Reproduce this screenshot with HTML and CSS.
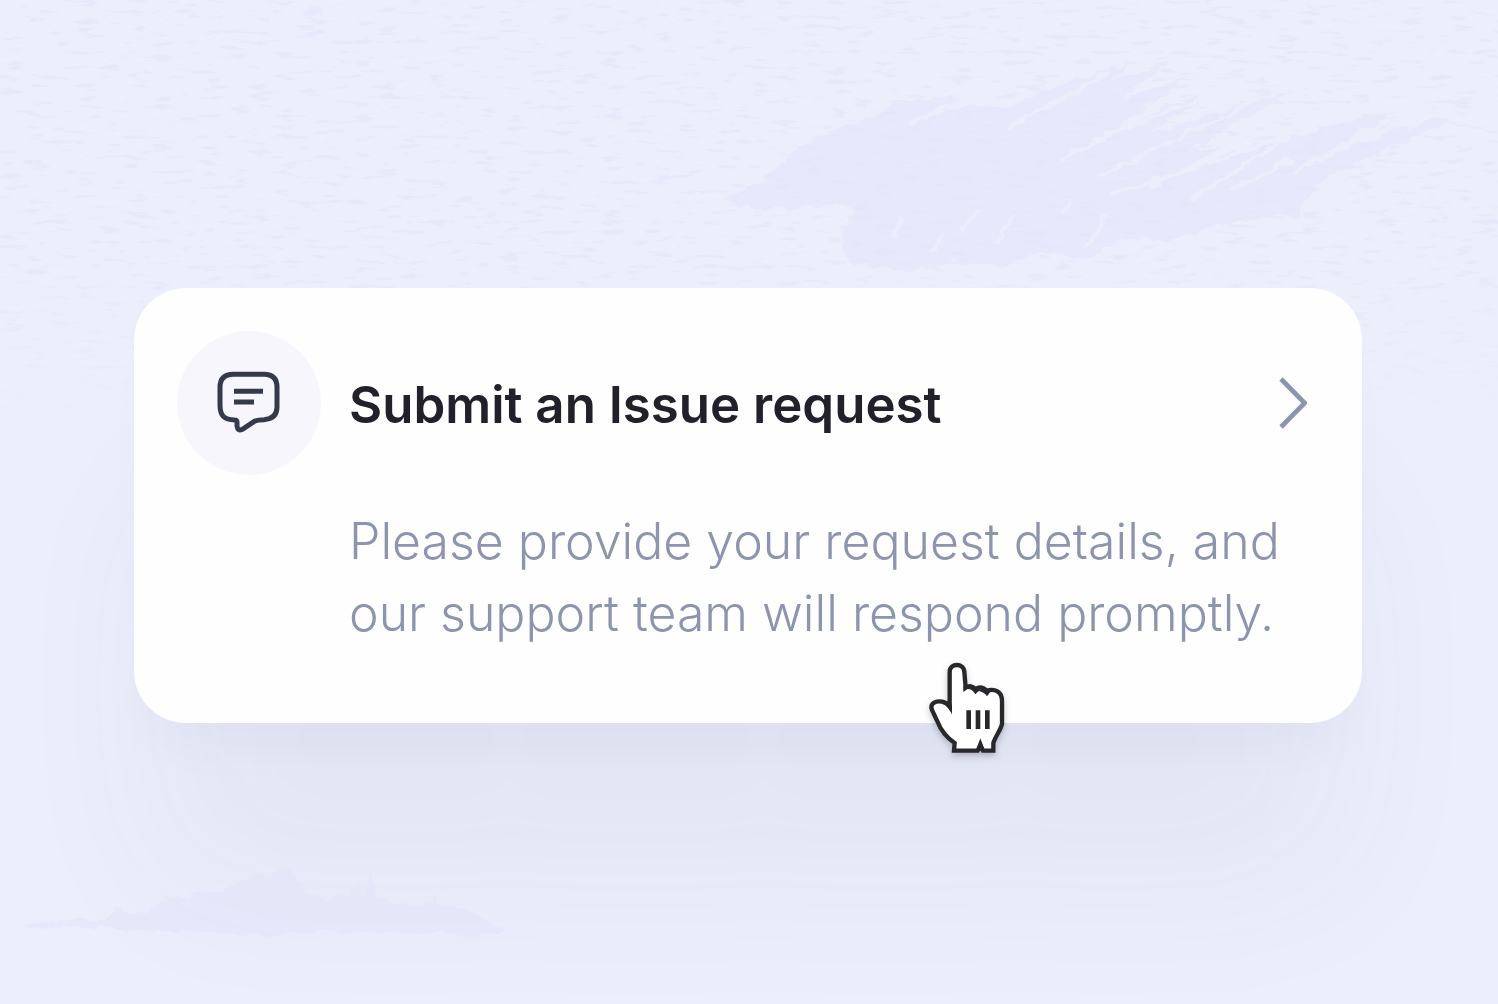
FILE: index.html
```
<!DOCTYPE html>
<html lang="en">
<head>
	<meta charset="UTF-8">
	<meta name="viewport" content="width=device-width, initial-scale=1.0">
	<title>Submit an Issue request</title>
	<link rel="stylesheet" href="styles.css">
</head>
<body>
<!-- painted backdrop -->
<svg class="backdrop" viewBox="0 0 1498 1004" preserveAspectRatio="xMidYMid slice" aria-hidden="true">
	<defs>
		<filter id="rough" x="-5%" y="-10%" width="110%" height="120%">
			<feTurbulence type="fractalNoise" baseFrequency="0.06 0.09" numOctaves="4" seed="4"/>
			<feDisplacementMap in="SourceGraphic" scale="12" xChannelSelector="R" yChannelSelector="G"/>
		</filter>
		<filter id="grain" x="0" y="0" width="100%" height="100%" color-interpolation-filters="sRGB">
			<feTurbulence type="fractalNoise" baseFrequency="0.04 0.2" numOctaves="3" seed="9"/>
			<feColorMatrix values="0 0 0 0 0.87  0 0 0 0 0.89  0 0 0 0 0.97  0 0 0 7 -4.2"/>
		</filter>
		<linearGradient id="fade" x1="0" y1="0" x2="0" y2="1">
			<stop offset="0.6" stop-color="#fff"/>
			<stop offset="1" stop-color="#000"/>
		</linearGradient>
		<mask id="top">
			<rect width="1498" height="420" fill="url(#fade)"/>
		</mask>
	</defs>
	<g mask="url(#top)">
		<rect width="1498" height="420" filter="url(#grain)" opacity=".5"/>
	</g>
	<g filter="url(#rough)">
		<path class="paint" d="M722 200 L765 178 L800 148 L850 124 L910 100 L968 98 L940 110 L1010 104 L1060 86 L1130 62 L1110 80 L1170 62 L1120 100 L1190 76 L1140 112 L1215 92 L1150 132 L1295 90 L1190 150 L1240 150 L1400 110 L1310 160 L1440 116 L1450 120 L1330 176 L1300 200 L1300 214 L1220 224 L1180 240 L1130 236 L1090 258 L1040 252 L1000 268 L960 258 L910 272 L850 262 L840 240 L856 206 L810 206 L760 210 Z"/>
		<path class="gap" d="M908 124 L990 88 M1008 128 L1110 72 M1062 160 L1215 76 M1090 140 L1240 84 M1100 176 L1250 104 M1110 196 L1280 138 M1150 186 L1270 130 M1190 200 L1290 136 M1294 172 L1420 112 M1230 190 L1290 160"/>
		<path class="gap" d="M892 236 L904 218 M962 230 L980 210 M996 244 L1014 216 M1060 212 L1072 202 M1086 250 L1104 218 M930 252 L944 238"/>
	</g>
</svg>

<main class="page">
	<a class="card" href="#">
		<span class="badge">
			<svg class="icon-chat" viewBox="141 153 192 192" aria-hidden="true">
				<path d="M190 163 H282 Q321 163 321 202 V262 Q321 296 282 299 Q262 299 253 304 L217 328 Q203 335 201 318 V307 Q201 300 194 300 C163 299 150 288 150 255 V202 Q150 163 190 163 Z"/>
				<path d="M192 214 H279 M192 246 H252"/>
			</svg>
		</span>
		<strong class="title">Submit an Issue request</strong>
		<svg class="icon-arrow" viewBox="57 49 84 156" aria-hidden="true">
			<path d="M63 55 L134 127 L63 199"/>
		</svg>
		<span class="text">Please provide your request details, and<br>our support team will respond promptly.</span>
		<svg class="pointer" viewBox="45 30 240 291" aria-hidden="true">
			<path class="hand" d="M132 302 L134 279 C108 262 92 240 82 214 L66 180 C58 160 78 151 96 155 C106 157 114 163 119 170 V66 C119 38 162 38 163 66 L167 113 C178 106 189 108 196 117 C208 110 221 113 230 122 C255 114 276 126 276 152 V222 C272 240 256 260 250 279 V302 H219 L211 286 L203 302 Z"/>
			<path class="ink" d="M116 160 L126 164 V194 Q122 178 112 168 Z M160 108 L168 107 L196 117 L230 122 L246 122 Q237 128 231 139 Q222 126 206 123 L196 133 Q186 115 170 117 L160 126 Z M211 265 L225 302 H197 Z"/>
			<path class="bars" d="M176 181 V237 M204 181 V237 M232 181 V237"/>
		</svg>
	</a>
</main>

<svg class="backdrop" viewBox="0 0 1498 1004" preserveAspectRatio="xMidYMid slice" aria-hidden="true">
	<path class="paint" filter="url(#rough)" d="M20 924 L70 920 L110 918 L118 904 L126 914 L150 912 L165 898 L225 890 L246 878 L262 870 L266 884 L278 868 L290 872 L304 888 L320 898 L352 896 L358 880 L364 897 L372 868 L374 896 L410 906 L432 904 L436 894 L440 906 L465 908 L505 928 L500 934 L330 932 L260 935 L150 930 L30 928 Z"/>
</svg>
</body>
</html>
```
FILE: styles.css
```
*{box-sizing:border-box;}
body{margin:0;background:#eceefc;font-family:Inter,"Liberation Sans",sans-serif;overflow-x:hidden;}

.backdrop{position:absolute;top:0;left:0;width:100%;height:100%;pointer-events:none;}
.paint{fill:#e3e4fa;fill-opacity:.6;}
.gap{fill:none;stroke:#eceefc;stroke-width:4;}

.page{display:flex;align-items:center;justify-content:center;min-height:100vh;padding:6px 25px 0 23px;}

.card{
	position:relative;
	display:grid;
	grid-template-columns:144px 1fr auto;
	align-items:center;
	column-gap:28px;
	row-gap:30px;
	width:100%;
	max-width:1228px;
	padding:43px 43px 74px;
	border-radius:52px;
	background:#fefefe;
	box-shadow:0 40px 60px -24px rgba(50,70,80,.04),0 180px 160px -20px rgba(50,70,80,.05);
	color:#22202a;
	text-decoration:none;
	cursor:pointer;
}

.badge{display:flex;align-items:center;justify-content:center;width:144px;height:144px;border-radius:50%;background:#f7f6fd;}
.icon-chat{width:64px;height:64px;fill:none;stroke:#353a4b;stroke-width:15;stroke-linejoin:round;}
.icon-arrow{width:28px;height:52px;margin-right:12px;fill:none;stroke:#8d94ae;stroke-width:14;}

.title{padding-top:4px;font-size:51px;line-height:72px;font-weight:600;}
.text{grid-column:2 / 4;font-size:50px;line-height:72px;font-weight:300;color:#8d94ae;}

/* hand over the card edge */
.pointer{position:absolute;top:372px;left:791px;width:80px;height:97px;filter:drop-shadow(0 3px 3px rgba(30,30,50,.25));}
.hand{fill:#fff;stroke:#28272b;stroke-width:13;}
.ink{fill:#28272b;}
.bars{fill:none;stroke:#28272b;stroke-width:14;}
```
